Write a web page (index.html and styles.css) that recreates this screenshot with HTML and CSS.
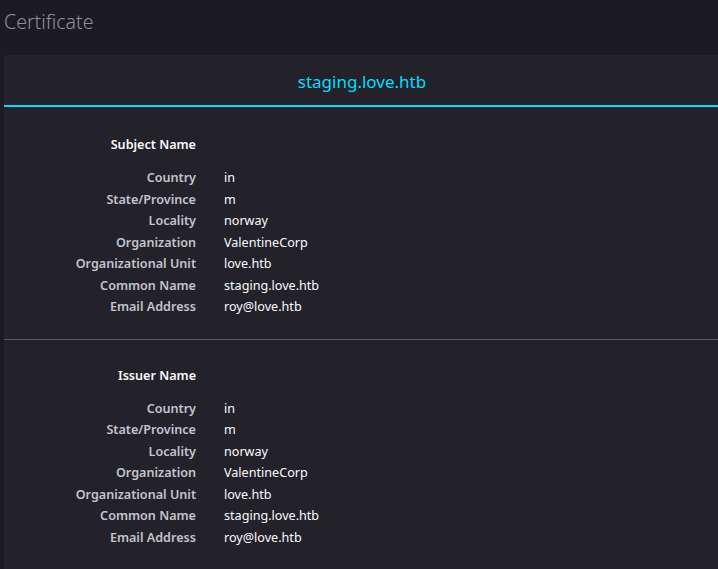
FILE: index.html
```html
<!DOCTYPE html>
<html>
<head>
<meta charset="utf-8">
<link rel="stylesheet" href="styles.css">
</head>
<body>
<div class="page">
  <h1 class="title">Certificate</h1>
  <div class="card">
    <div class="tab">staging.love.htb</div>
    <section class="group">
      <div class="heading">Subject Name</div>
      <div class="rows">
        <div class="label">Country</div><div class="value">in</div>
        <div class="label">State/Province</div><div class="value">m</div>
        <div class="label">Locality</div><div class="value">norway</div>
        <div class="label">Organization</div><div class="value">ValentineCorp</div>
        <div class="label">Organizational Unit</div><div class="value">love.htb</div>
        <div class="label">Common Name</div><div class="value">staging.love.htb</div>
        <div class="label">Email Address</div><div class="value">roy@love.htb</div>
      </div>
    </section>
    <section class="group">
      <div class="heading">Issuer Name</div>
      <div class="rows">
        <div class="label">Country</div><div class="value">in</div>
        <div class="label">State/Province</div><div class="value">m</div>
        <div class="label">Locality</div><div class="value">norway</div>
        <div class="label">Organization</div><div class="value">ValentineCorp</div>
        <div class="label">Organizational Unit</div><div class="value">love.htb</div>
        <div class="label">Common Name</div><div class="value">staging.love.htb</div>
        <div class="label">Email Address</div><div class="value">roy@love.htb</div>
      </div>
    </section>
  </div>
</div>
</body>
</html>
```
FILE: styles.css
```css
html, body {
  margin: 0;
  padding: 0;
  background: #1c1b22;
  overflow: hidden;
}
body {
  font-family: "Noto Sans", sans-serif;
  color: #fbfbfe;
}
.page {
  padding: 0 0 0 4px;
}
.title {
  margin: 0;
  height: 55px;
  font-size: 19.5px;
  font-weight: 300;
  line-height: 44px;
  color: #8f8f9d;
}
.card {
  background: #23222b;
  width: 730px;
}
.tab {
  padding: 15px 0 11px;
  line-height: 24px;
  font-size: 17px;
  text-align: center;
  color: #00ddff;
  border-bottom: 2px solid #00ddff;
  width: 716px;
}
.group {
  padding: 27px 0 21px;
  font-size: 12.6px;
  line-height: 21.5px;
}
.group + .group {
  border-top: 1px solid #5b5b66;
  padding-top: 25px;
}
.heading {
  width: 192px;
  text-align: right;
  font-weight: 600;
  color: #fbfbfe;
  margin-bottom: 11.5px;
}
.rows {
  display: grid;
  grid-template-columns: 192px 1fr;
  column-gap: 28px;
}
.label {
  text-align: right;
  font-weight: 600;
  color: #c4c4ce;
}
.value {
  color: #fbfbfe;
}
```
